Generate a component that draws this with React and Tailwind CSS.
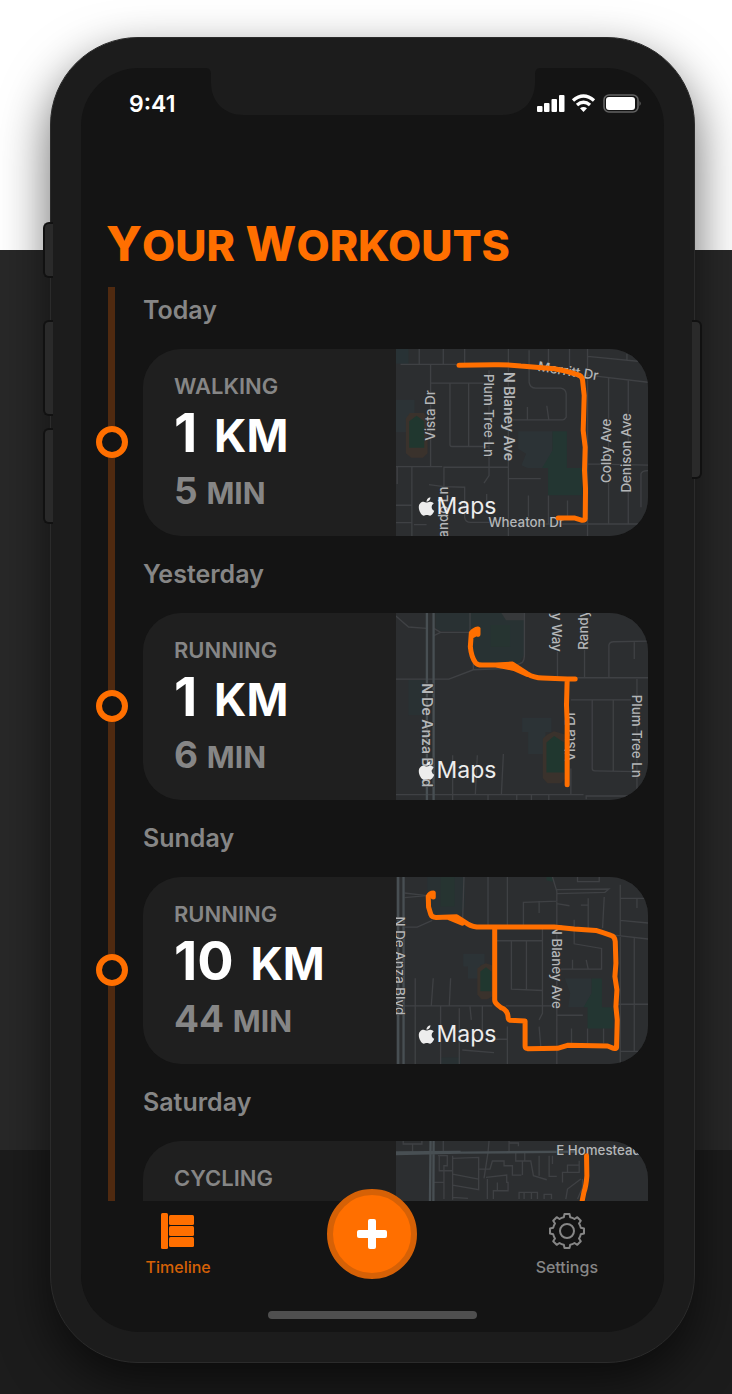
import { FaApple } from 'react-icons/fa';

const workouts = [
  {
    day: 'Today',
    type: 'Walking',
    distance: '1',
    minutes: '5',
    map: {
      viewBox: '45 26 759 560',
      parks: [
        { d: 'M45 178H102V275H45Z', fill: '#2c3336' },
        { d: 'M45 26H84V70H45Z', fill: '#283235' },
        { d: 'M88 218H130L141 234V338L127 352H92L76 338V234Z', fill: '#3a322c' },
        { d: 'M86 242L108 226L131 242V322H86Z', fill: '#20372f' },
        { d: 'M412 272H515V382H440L422 374L436 340L412 325Z', fill: '#2c3336' },
        { d: 'M515 272H558V382H604V464H502V382H484L515 330Z', fill: '#233632' },
      ],
      roads:
        'M60 72H240 M116 26V70 M188 26V70 M252 26V70 M383 26V586 M150 72V378 M152 128H325 M208 128V312Q208 318 214 318H325 M264 128V318 M325 90V405L310 428 M445 30V125Q447 143 465 143H540Q555 146 556 160V230Q552 238 545 238H385 M440 238V200 M504 238L498 196 M503 26V80 M566 26V90 M620 26V586 M620 48L804 66 M738 40V60 M620 104L804 126 M683 112V550 M742 118V550 M620 370L804 374 M780 500V400Q782 390 804 390 M45 378H185 M190 450V380H383 M50 378V430 M94 378V586 M145 432L190 438L252 440V530Q254 545 270 545H330 M45 494H92 M45 546H92 M100 552H138 M383 414H480 M443 465V550 M503 465V550 M560 480V530 M383 550H804 M318 460V500',
      labels: [
        { text: 'Vista Dr', x: 147, y: 225, rotate: -90 },
        { text: 'Plum Tree Ln', x: 326, y: 225, rotate: 90 },
        { text: 'N Blaney Ave', x: 385, y: 228, rotate: 90, bold: true },
        { text: 'Merritt Dr', x: 562, y: 91, rotate: 9 },
        { text: 'Colby Ave', x: 676, y: 331, rotate: -90 },
        { text: 'Denison Ave', x: 736, y: 337, rotate: -90 },
        { text: 'Wheaton Dr', x: 436, y: 543, rotate: 0 },
        { text: 'Orlando Ln', x: 188, y: 438, rotate: -90, anchor: 'end' },
      ],
      route:
        'M235 75L340 73Q380 72 420 77L520 85Q560 92 590 103Q603 105 605 118L610 165L607 270L613 320L611 390L614 445L613 532Q614 540 604 539L580 532L532 532',
    },
  },
  {
    day: 'Yesterday',
    type: 'Running',
    distance: '1',
    minutes: '6',
    map: {
      viewBox: '45 24 759 560',
      parks: [
        { d: 'M165 24H268V78H180L165 70Z', fill: '#293133' },
        { d: 'M268 24H430V150L410 185H290L268 150Z', fill: '#283233' },
        { d: 'M330 60H388V125H330Z', fill: '#263431' },
        { d: 'M362 24H430V46H376Z', fill: '#37393b' },
        { d: 'M84 225H130V330H84Z', fill: '#293133' },
        { d: 'M424 338H512V380H494V446H442V380H424Z', fill: '#2c3336' },
        { d: 'M500 388L520 378L552 388V520L540 534H500L486 518V400Z', fill: '#3a322c' },
        { d: 'M497 412L520 392L550 412V502H497Z', fill: '#20372f' },
      ],
      roads:
        'M45 32L84 66L138 70 M160 70L180 82H268L268 24 M160 92L180 82 M45 222H205L278 194L385 190L425 172Q431 165 431 150V24 M278 194V170 M560 218H804 M530 140V218 M611 135V218 M684 218V120Q686 110 698 110L804 108 M760 110V162 M768 222V550 M570 284H750 M634 284V490Q634 497 642 497L768 499 M697 284V497 M45 568H608 M616 582V572H804 M216 450V584 M290 450L284 568 M368 446L362 568 M322 568V584 M408 568V584 M452 568V584 M504 568V584 M570 490V568',
      highway: 'M139 24V584 M159 24V584',
      labels: [
        { text: 'N De Anza Blvd', x: 142, y: 390, rotate: 90, bold: true },
        { text: 'Randy Way', x: 528, y: 140, rotate: 90, anchor: 'end' },
        { text: 'Randy Ln', x: 607, y: 134, rotate: -90, anchor: 'start' },
        { text: 'Vista Dr', x: 566, y: 393, rotate: -90 },
        { text: 'Plum Tree Ln', x: 767, y: 393, rotate: 90 },
      ],
      route:
        'M292 88V72Q280 74 272 84L269 125Q272 155 284 172Q290 180 304 180H345L395 177L440 206Q460 218 485 219L560 222H583 M292 72L286 86L275 92 M345 180L370 184L400 190L440 208 M559 224L557 300L559 350V538',
    },
  },
  {
    day: 'Sunday',
    type: 'Running',
    distance: '10',
    minutes: '44',
    map: {
      viewBox: '45 22 759 560',
      parks: [
        { d: 'M140 22H252V110L235 140H160L140 110Z', fill: '#293133' },
        { d: 'M180 22H222V110H180Z', fill: '#263431' },
        { d: 'M248 252H312V285H300V326H262V290H248Z', fill: '#2c3336' },
        { d: 'M302 286L315 280L334 286V380L320 388H302L290 374V296Z', fill: '#3a322c' },
        { d: 'M299 305L316 292L332 305V364H299Z', fill: '#20372f' },
        { d: 'M552 326H632V372L610 412H562L568 370Z', fill: '#2c3336' },
        { d: 'M632 326H663V412H697V476H620V412H608L632 370Z', fill: '#233632' },
        { d: 'M497 22H516V36L497 32Z', fill: '#233632' },
        { d: 'M180 562H240V582H180Z', fill: '#293133' },
      ],
      roads:
        'M72 70L138 78 M72 84L138 78 M72 172H110L155 152 M250 22L246 150 M322 22V170 M380 22V170 M346 213H485 M392 213V358L485 362 M437 213V358 M485 175V430L475 450 M428 166V98L530 94 M475 94V130 M515 22L528 65V582 M528 60L684 58L672 68L528 72 M590 22V36H655V22 M528 102L566 108 M600 106H622V175 M622 86V106 M670 82L665 175 M580 150V222L662 236V298H540 M575 298V270 M622 298L616 270 M718 45V582 M718 86H804 M768 86V115 M718 152L804 160 M700 196L804 208 M760 205V545 M72 408H335 M375 408H530 M700 403H804 M104 325V582 M158 325L152 408 M210 325L206 408 M180 408V582 M236 415V582 M268 410L272 450 M305 410V510 M380 470V582 M475 470L480 530 M530 436H606 M572 476V520 M620 476V520 M668 476V520 M718 544H804 M245 540L340 548 M340 508H380',
      highway: 'M53 22V582 M69 22V582',
      labels: [
        { text: 'N De Anza Blvd', x: 59, y: 288, rotate: 90 },
        { text: 'N Blaney Ave', x: 530, y: 291, rotate: 90 },
      ],
      route:
        'M158 82V70Q148 70 143 80L144 112L151 135Q154 143 166 143L228 141L262 163Q275 172 300 172L520 172L580 178L645 182Q665 188 690 197Q702 200 703 215L705 280L702 320L708 360L705 410L709 450L707 530Q708 537 698 535L680 528L560 526L530 535L440 536Q433 535 433 528V453L388 451Q382 450 382 440Q381 425 368 416Q360 414 352 406Q342 398 342 390V178 M205 144L245 160',
    },
  },
  {
    day: 'Saturday',
    type: 'Cycling',
    map: {
      viewBox: '45 36 759 560',
      parks: [],
      roads:
        'M68 36V45H124V36 M96 68V45 M188 36V70 M325 36L322 70L310 148 M385 36V68 M385 42H413V52 M172 80H200V110H190V210 M176 80V125H190 M190 125H215 M160 160H188 M216 80V212 M216 88L294 85V182L216 168 M216 135L294 150 M216 205L262 208 M294 120H328L335 96H370V110H395V138H422 M316 145L378 138V160H382V185H338V210 M320 150V210 M350 185V160 M405 70V96H450L458 140L498 152 M432 70V96 M425 96V138 M475 80V140 M505 80V142H528 M515 80V105 M595 95V130H545V160 M560 130V108H595 M415 210V190H470V210 M430 190V210 M452 190V210 M490 210V196H512V210 M605 150V175L590 210 M555 210L560 180L600 150',
      highway: 'M150 36L147 330 M159 36L158 330 M45 75L240 71L600 68 M45 70L240 69',
      labels: [{ text: 'E Homestead', x: 526, y: 64, rotate: 0, anchor: 'start' }],
      route: 'M617 80L618 140Q616 170 609 190L602 225L590 400',
    },
  },
];

function RouteMap({ map }) {
  return (
    <div className="relative overflow-hidden bg-[#2c2e30]">
      <svg viewBox={map.viewBox} preserveAspectRatio="xMidYMid slice" className="block h-full w-full">
        {map.parks.map((park) => (
          <path key={park.d} d={park.d} fill={park.fill} />
        ))}
        <path d={map.roads} fill="none" stroke="#3f4144" strokeWidth="4" />
        {map.highway && <path d={map.highway} fill="none" stroke="#484f53" strokeWidth="7" />}
        {map.labels.map((label) => (
          <text
            key={label.text}
            transform={`translate(${label.x} ${label.y}) rotate(${label.rotate})`}
            textAnchor={label.anchor || 'middle'}
            dominantBaseline="central"
            fontSize={label.bold ? 42 : 40}
            fontWeight={label.bold ? 600 : 500}
            fill="#b4b6b8"
            stroke="#2c2e30"
            strokeWidth="4"
            paintOrder="stroke"
          >
            {label.text}
          </text>
        ))}
        <path d={map.route} fill="none" stroke="#ff6f00" strokeWidth="15" strokeLinecap="round" strokeLinejoin="round" />
      </svg>

      {/* Attribution */}
      <div className="absolute bottom-4 left-5 flex items-center text-[#ededed]">
        <FaApple size={21} />
        <span className="text-[23px] leading-7">Maps</span>
      </div>
    </div>
  );
}

function WorkoutDay({ workout }) {
  return (
    <section className="flex">
      {/* Timeline rail */}
      <div className="flex w-[61px] shrink-0 flex-col items-center">
        <div className="h-[139px] w-[7px] bg-[#502a10]" />
        <div className="size-8 rounded-full border-6 border-[#ff6f00]" />
        <div className="w-[7px] flex-1 bg-[#502a10]" />
      </div>

      <div className="min-w-0 flex-1 pt-[9px] pr-4 pb-[15px] pl-px">
        <h2 className="mb-[25px] text-[25px] leading-7 font-semibold text-[#868686]">{workout.day}</h2>
        <article className="grid h-[187px] grid-cols-2 overflow-hidden rounded-[38px] bg-[#1f1f1f]">
          <div className="pt-[23px] pl-[31px] text-[#868686]">
            <h3 className="text-[22px] leading-7 font-semibold uppercase">{workout.type}</h3>
            {workout.distance && (
              <p className="mt-1.5 text-[54px] leading-[54px] font-bold text-white">
                {workout.distance} <span className="ml-1 text-[45px]">KM</span>
              </p>
            )}
            {workout.minutes && (
              <p className="mt-2 text-[37px] leading-10 font-bold">
                {workout.minutes} <span className="text-[30px]">MIN</span>
              </p>
            )}
          </div>
          <RouteMap map={workout.map} />
        </article>
      </div>
    </section>
  );
}

function StatusBar() {
  return (
    <div className="relative flex h-[72px] shrink-0 items-center justify-between pr-[22px] pl-12">
      <svg width="334" height="47" viewBox="0 0 334 47" fill="#1c1c1c" className="absolute top-0 left-1/2 -translate-x-1/2">
        <path d="M0 0Q5 0 5 6V14C5 34 18 47 38 47H296C316 47 329 34 329 14V6Q329 0 334 0Z" />
      </svg>
      <span className="text-[23px] leading-7 font-semibold text-white">9:41</span>
      <svg width="106" height="20" viewBox="0 0 106 20" fill="#fff">
        <rect x="1" y="12" width="5.500" height="6" rx="1" />
        <rect x="8" y="9" width="5.500" height="9" rx="1" />
        <rect x="15.500" y="5" width="5.500" height="13" rx="1" />
        <rect x="23" y="1" width="5.500" height="17" rx="1" />
        <g fill="none" stroke="#fff" strokeWidth="3.4">
          <path d="M37 6.500Q47.500 -2.500 58 6.500" />
          <path d="M41 11Q47.500 5.500 54 11" />
        </g>
        <path d="M44 14.300Q47.500 11.500 51 14.300L47.500 18Z" />
        <rect x="68" y="1" width="34" height="17" rx="5" fill="none" stroke="#626262" strokeWidth="1.6" />
        <rect x="70" y="3" width="29" height="13" rx="3" />
        <path d="M103.500 7Q106 9.500 103.500 12Z" fill="#626262" />
      </svg>
    </div>
  );
}

function TabBar() {
  return (
    <nav className="relative grid h-[110px] shrink-0 grid-cols-3 bg-[#141414] text-[16px] leading-5 font-medium">
      <button type="button" className="flex flex-col items-center pt-3 text-[#d66106]">
        <svg width="34" height="36" viewBox="0 0 34 36" fill="#ff6f00">
          <rect x="0" y="0" width="7" height="36" rx="1.500" />
          <rect x="8" y="2" width="25" height="10" rx="1.500" />
          <rect x="8" y="13" width="25" height="10" rx="1.500" />
          <rect x="8" y="24" width="25" height="10" rx="1.500" />
        </svg>
        <span className="mt-2">Timeline</span>
      </button>
      <div className="flex justify-center">
        <button
          type="button"
          aria-label="Add workout"
          className="-mt-3 flex size-[90px] items-center justify-center rounded-full border-6 border-[#d66106] bg-[#ff6f00]"
        >
          <svg width="30" height="30" viewBox="0 0 30 30" fill="#fff">
            <rect x="0" y="11" width="30" height="8" rx="2" />
            <rect x="11" y="0" width="8" height="30" rx="2" />
          </svg>
        </button>
      </div>
      <button type="button" className="flex flex-col items-center pt-3 text-[#868686]">
        <svg width="36" height="36" viewBox="0 0 36 36" fill="none" stroke="currentColor" strokeWidth="2" strokeLinejoin="round">
          <circle cx="18" cy="18" r="7" />
          <path d="M15.500 1H20.500L21.200 4.200Q23.500 4.600 25.500 6L28.300 4.200L31.800 7.700L30 10.500Q31.400 12.500 31.800 14.800L35 15.500V20.500L31.800 21.200Q31.400 23.500 30 25.500L31.800 28.300L28.300 31.800L25.500 30Q23.500 31.400 21.200 31.800L20.500 35H15.500L14.800 31.800Q12.500 31.400 10.500 30L7.700 31.800L4.200 28.300L6 25.500Q4.600 23.500 4.200 21.200L1 20.500V15.500L4.200 14.800Q4.600 12.500 6 10.500L4.200 7.700L7.700 4.200L10.500 6Q12.500 4.600 14.800 4.200Z" />
        </svg>
        <span className="mt-2">Settings</span>
      </button>
    </nav>
  );
}

export default function App() {
  return (
    <main className="flex h-screen flex-col overflow-hidden bg-[linear-gradient(#fff_250px,#282828_250px,#282828_1150px,#1c1c1c_1150px)] pt-[37px] pr-[37px] pb-[31px] pl-[50px] font-['Inter',sans-serif]">
      <div className="relative flex min-h-0 flex-1 flex-col rounded-[88px] border border-[#2b2b2b] bg-[#1c1c1c] p-[30px] shadow-[0_20px_50px_rgba(0,0,0,0.6)]">
        {/* Side buttons */}
        <div className="absolute top-[184px] -left-2 h-14 w-2.5 rounded-l-md border-2 border-r-0 border-[#111] bg-[#2a2a2a]" />
        <div className="absolute top-[282px] -left-2 h-24 w-2.5 rounded-l-md border-2 border-r-0 border-[#111] bg-[#2a2a2a]" />
        <div className="absolute top-[390px] -left-2 h-24 w-2.5 rounded-l-md border-2 border-r-0 border-[#111] bg-[#2a2a2a]" />
        <div className="absolute top-[282px] -right-2 h-[159px] w-2.5 rounded-r-md border-2 border-l-0 border-[#111] bg-[#2a2a2a]" />

        <div className="flex min-h-0 flex-1 flex-col overflow-hidden rounded-[58px] bg-[#141414]">
          <StatusBar />
          <h1 className="mt-20 mb-[18px] shrink-0 pl-[25px] text-[48px] leading-[48px] font-extrabold text-[#ff6f00]">
            Y<span className="text-[43px]">OUR</span> W<span className="text-[43px]">ORKOUTS</span>
          </h1>
          <div className="min-h-0 flex-1 overflow-hidden">
            {workouts.map((workout) => (
              <WorkoutDay key={workout.day} workout={workout} />
            ))}
          </div>
          <TabBar />
          <div className="mx-auto mb-[13px] h-2 w-[209px] shrink-0 rounded-full bg-[#4f4f4f]" />
        </div>
      </div>
    </main>
  );
}
